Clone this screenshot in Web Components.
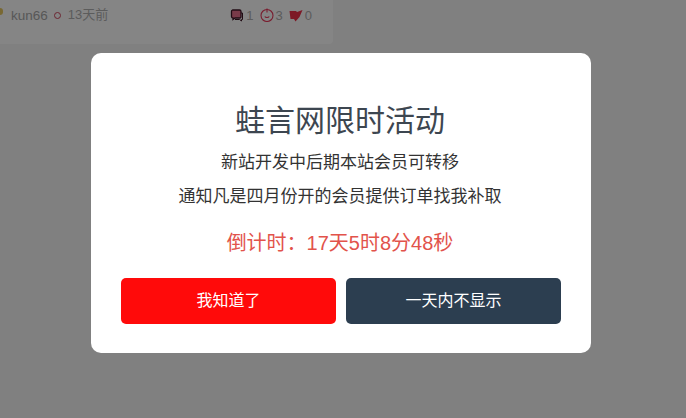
<!DOCTYPE html>
<html lang="zh">
<head>
<meta charset="utf-8">
<title>蛙言网</title>
<style>
    html, body {
        margin: 0;
        height: 100%;
        background: #f5f5f5;
        font-family: "Liberation Sans", "Noto Sans CJK SC", sans-serif;
    }
    body { overflow: hidden; }
</style>
</head>
<body>
<post-meta author="kun66" time="13天前" comments="1" likes="3" dislikes="0"></post-meta>
<notice-overlay>
    <notice-dialog heading="蛙言网限时活动">
        <p>新站开发中后期本站会员可转移</p>
        <p>通知凡是四月份开的会员提供订单找我补取</p>
        <count-down slot="timer">倒计时：17天5时8分48秒</count-down>
        <notice-button slot="actions" color="#ff0a0a">我知道了</notice-button>
        <notice-button slot="actions" color="#2c3e50">一天内不显示</notice-button>
    </notice-dialog>
</notice-overlay>

<script>
class PostMeta extends HTMLElement {
    constructor() {
        super();
        this.attachShadow({ mode: 'open' });
        const a = (n) => this.getAttribute(n);
        this.shadowRoot.innerHTML = `
            <style>
                :host {
                    display: flex;
                    align-items: center;
                    box-sizing: border-box;
                    width: 333px;
                    height: 44px;
                    padding: 0 21px 14px 0;
                    background: #fff;
                    color: #b0b0b0;
                    font-size: 13px;
                    border-radius: 0 0 4px 0;
                }
                .avatar {
                    width: 3px;
                    height: 7px;
                    margin-right: 8px;
                    margin-top: -7px;
                    background: #e8c860;
                    border-radius: 0 3px 3px 0;
                }
                .name { font-size: 13.500px; color: #a8a8a8; }
                .dot {
                    box-sizing: border-box;
                    width: 7px;
                    height: 7px;
                    margin: 0 7px 0 6px;
                    border: 1.500px solid #d0455e;
                    border-radius: 50%;
                }
                .time { padding-bottom: 3px; }
                .stats { display: flex; align-items: center; margin-left: auto; }
                .stat { display: flex; align-items: center; gap: 2px; margin-left: 6px; }
                svg { width: 14px; height: 14px; display: block; }
            </style>
            <span class="avatar"></span>
            <span class="name">${a('author')}</span>
            <span class="dot"></span>
            <span class="time">${a('time')}</span>
            <div class="stats">
                <span class="stat">
                    <svg viewBox="0 0 14 14"><path d="M2.500 2h7a1.500 1.500 0 0 1 1.500 1.500V9a1 1 0 0 1-1 1H5l-2 1.500V10a1.500 1.500 0 0 1-1.500-1.500v-5A1.500 1.500 0 0 1 2.500 2z" fill="#e8708c" stroke="#401828" stroke-width="1.300"/><path d="M11 5h1.500v6.500h-1v1.500l-2-1.500H5" fill="none" stroke="#401828" stroke-width="1"/></svg>
                    ${a('comments')}
                </span>
                <span class="stat">
                    <svg viewBox="0 0 14 14" fill="none" stroke="#e8385a" stroke-width="1.100"><circle cx="7" cy="7.500" r="6"/><path d="M7 .5v4M4.800 8.500c.7 1.400 3.700 1.400 4.400 0"/></svg>
                    ${a('likes')}
                </span>
                <span class="stat">
                    <svg viewBox="0 0 14 14"><path d="M.5 3h6.500l1 1 5.500-2-3 7-4 4.500-1.500-2.500H1.500z" fill="#f0304a"/></svg>
                    ${a('dislikes')}
                </span>
            </div>
        `;
    }
}

class NoticeOverlay extends HTMLElement {
    constructor() {
        super();
        this.attachShadow({ mode: 'open' });
        this.shadowRoot.innerHTML = `
            <style>
                :host {
                    position: fixed;
                    inset: 0;
                    display: flex;
                    align-items: center;
                    justify-content: center;
                    box-sizing: border-box;
                    padding: 0 4px 12px 0;
                    background: rgba(0, 0, 0, .48);
                }
            </style>
            <slot></slot>
        `;
    }
}

class NoticeDialog extends HTMLElement {
    constructor() {
        super();
        this.attachShadow({ mode: 'open' });
        this.shadowRoot.innerHTML = `
            <style>
                :host {
                    display: flex;
                    flex-direction: column;
                    box-sizing: border-box;
                    width: 500px;
                    height: 300px;
                    padding: 48px 30px 29px;
                    background: #fff;
                    border-radius: 10px;
                    text-align: center;
                }
                h2 {
                    margin: 0 0 5px;
                    padding-right: 2px;
                    font-size: 30px;
                    line-height: 40px;
                    font-weight: 400;
                    color: #3d4650;
                }
                .body { padding-right: 2px; font-size: 17px; color: #333; }
                ::slotted(p) {
                    margin: 0;
                    font-size: 17px;
                    line-height: 34px;
                }
                .actions {
                    display: flex;
                    gap: 10px;
                    margin-top: auto;
                }
            </style>
            <h2>${this.getAttribute('heading')}</h2>
            <div class="body"><slot></slot></div>
            <slot name="timer"></slot>
            <div class="actions"><slot name="actions"></slot></div>
        `;
    }
}

class CountDown extends HTMLElement {
    constructor() {
        super();
        this.attachShadow({ mode: 'open' });
        this.shadowRoot.innerHTML = `
            <style>
                :host {
                    display: block;
                    margin-top: 15px;
                    padding-right: 2px;
                    font-size: 20px;
                    line-height: 28px;
                    color: #e2534b;
                }
            </style>
            <slot></slot>
        `;
    }
}

class NoticeButton extends HTMLElement {
    constructor() {
        super();
        this.attachShadow({ mode: 'open' });
        this.shadowRoot.innerHTML = `
            <style>
                :host {
                    display: flex;
                    align-items: center;
                    justify-content: center;
                    flex: 1;
                    box-sizing: border-box;
                    height: 46px;
                    padding-bottom: 4px;
                    border-radius: 5px;
                    color: #fff;
                    font-size: 16px;
                    cursor: pointer;
                    background: ${this.getAttribute('color')};
                }
            </style>
            <slot></slot>
        `;
    }
}

customElements.define('post-meta', PostMeta);
customElements.define('notice-overlay', NoticeOverlay);
customElements.define('notice-dialog', NoticeDialog);
customElements.define('count-down', CountDown);
customElements.define('notice-button', NoticeButton);
</script>
</body>
</html>
